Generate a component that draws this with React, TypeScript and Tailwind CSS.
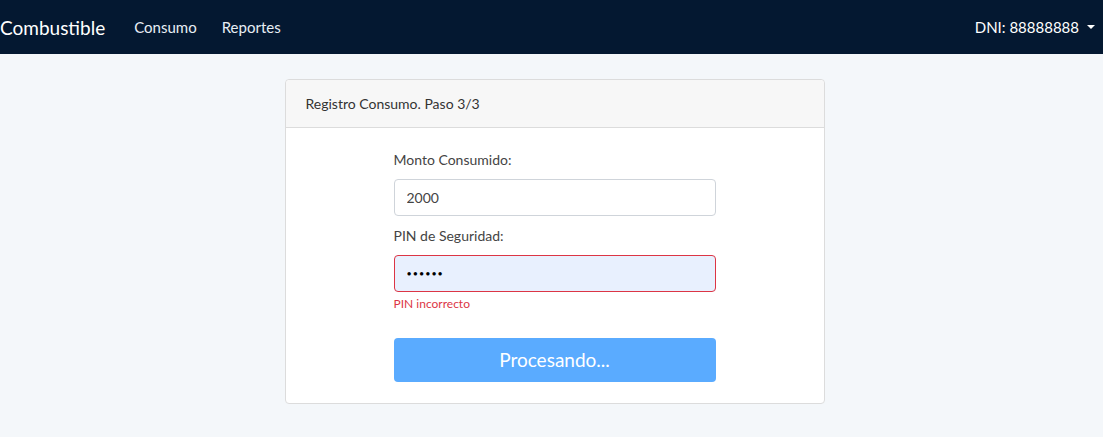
import { useState } from 'react';

const font = { fontFamily: 'Lato, "Open Sans", "Liberation Sans", sans-serif' };

const Navbar = () => (
  <nav className="h-[54px] bg-[#041831] flex items-center justify-between pr-[8px]">
    <div className="flex items-center">
      <a className="text-[19px] text-white leading-none">Combustible</a>
      <a className="ml-[29px] text-[15px] text-[#e8eef5]">Consumo</a>
      <a className="ml-[25px] text-[15px] text-[#e8eef5]">Reportes</a>
    </div>
    <div className="flex items-center text-[15px] text-white">
      <span>DNI: 88888888</span>
      <span className="ml-[8px] w-0 h-0 border-l-[4px] border-r-[4px] border-t-[4px] border-l-transparent border-r-transparent border-t-white" />
    </div>
  </nav>
);

export default function App() {
  const [monto, setMonto] = useState('2000');
  const [pin, setPin] = useState('123456');

  return (
    <div className="min-h-[437px] bg-[#f4f7fa]" style={font}>
      <Navbar />
      <div className="flex justify-center pt-[25px] pl-[6px]">
        <div className="w-[540px] bg-white border border-[#dcdcdc] rounded-[4px]">
          <div className="h-[48px] bg-[#f7f7f7] border-b border-[#dcdcdc] rounded-t-[4px] flex items-center px-[20px] text-[14px] text-[#333]">
            Registro Consumo. Paso 3/3
          </div>
          <div className="flex justify-center pt-[22px] pb-[21px]">
            <div className="w-[322px] flex flex-col">
              <label className="text-[14px] text-[#444] leading-[20px]">Monto Consumido:</label>
              <input
                value={monto}
                onChange={(e) => setMonto(e.target.value)}
                className="mt-[9px] h-[37px] border border-[#cfd4da] rounded-[4px] px-[12px] text-[14px] text-[#444] outline-none"
                style={font}
              />
              <label className="mt-[10px] text-[14px] text-[#444] leading-[20px]">PIN de Seguridad:</label>
              <input
                type="password"
                value={pin}
                onChange={(e) => setPin(e.target.value)}
                className="mt-[9px] h-[37px] border border-[#dc3545] bg-[#e8f0fe] rounded-[4px] px-[12px] text-[9px] tracking-[1px] text-black outline-none"
                style={font}
              />
              <div className="mt-[3px] text-[12px] text-[#dc3545] leading-[18px]">PIN incorrecto</div>
              <button
                disabled
                className="mt-[25px] h-[44px] bg-[#5aabff] rounded-[4px] text-white text-[19px]"
                style={font}
              >
                Procesando...
              </button>
            </div>
          </div>
        </div>
      </div>
    </div>
  );
}
